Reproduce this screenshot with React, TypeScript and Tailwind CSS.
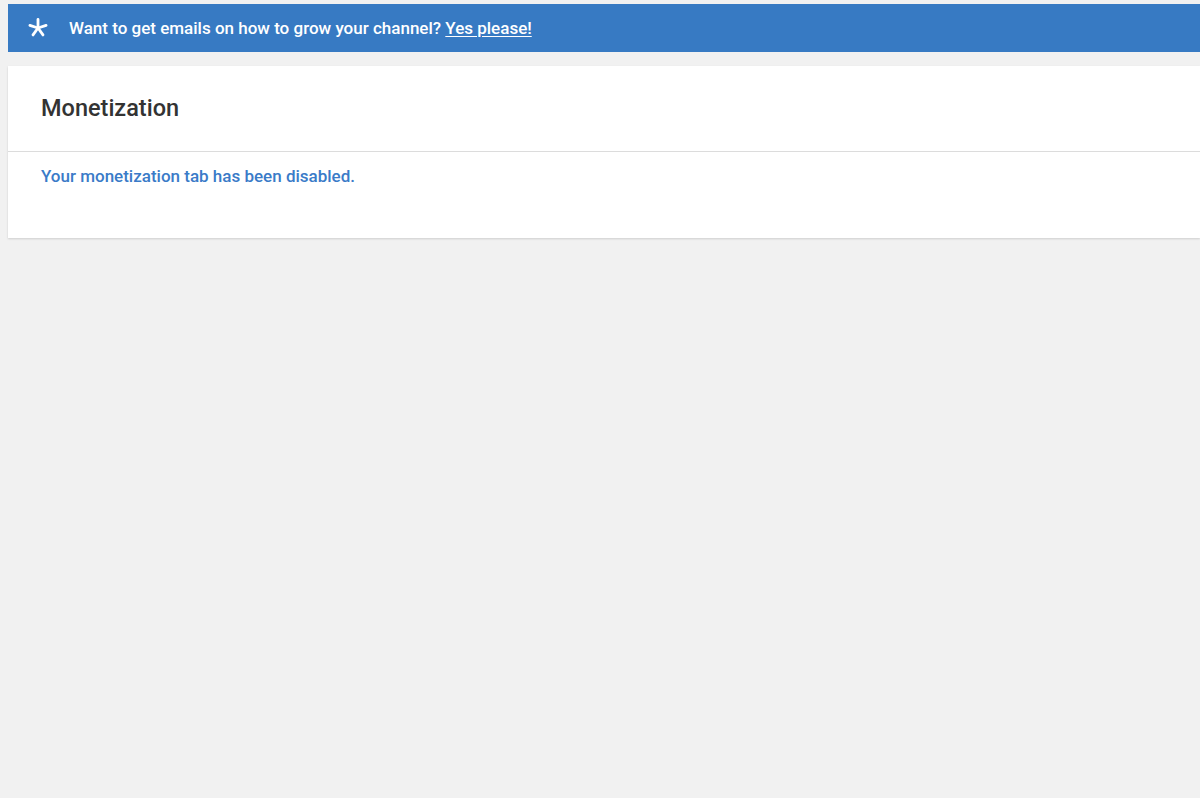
export default function App() {
  return (
    <div
      className="min-h-[798px] bg-[#f1f1f1] pt-1 pl-2"
      style={{ fontFamily: "Roboto, 'Liberation Sans', sans-serif" }}
    >
      <div className="flex h-12 items-center bg-[#377ac3] pl-5 text-white">
        {/* five-armed asterisk */}
        <svg
          aria-hidden="true"
          viewBox="0 0 20 20"
          className="h-5 w-5"
          stroke="currentColor"
          strokeWidth="2.8"
          strokeLinecap="round"
        >
          <line x1="10" y1="10" x2="10" y2="1.5" />
          <line x1="10" y1="10" x2="18.1" y2="7.4" />
          <line x1="10" y1="10" x2="15" y2="16.9" />
          <line x1="10" y1="10" x2="5" y2="16.9" />
          <line x1="10" y1="10" x2="1.9" y2="7.4" />
        </svg>
        <p className="ml-[21px] pt-[2px] text-[17px] font-medium">
          Want to get emails on how to grow your channel?{" "}
          <a href="#" className="underline underline-offset-2">
            Yes please!
          </a>
        </p>
      </div>

      <section className="mt-[14px] bg-white shadow-[0_1px_2px_rgba(0,0,0,0.15)]">
        <header className="flex h-[86px] items-center border-b border-[#dcdcdc] px-[33px]">
          <h1 className="text-[23.5px] font-medium text-[#333333]">
            Monetization
          </h1>
        </header>
        <div className="px-[33px] pt-[12px] pb-[50px]">
          <p className="text-[17px] leading-6 font-medium text-[#3a7bc8]">
            Your monetization tab has been disabled.
          </p>
        </div>
      </section>
    </div>
  );
}
